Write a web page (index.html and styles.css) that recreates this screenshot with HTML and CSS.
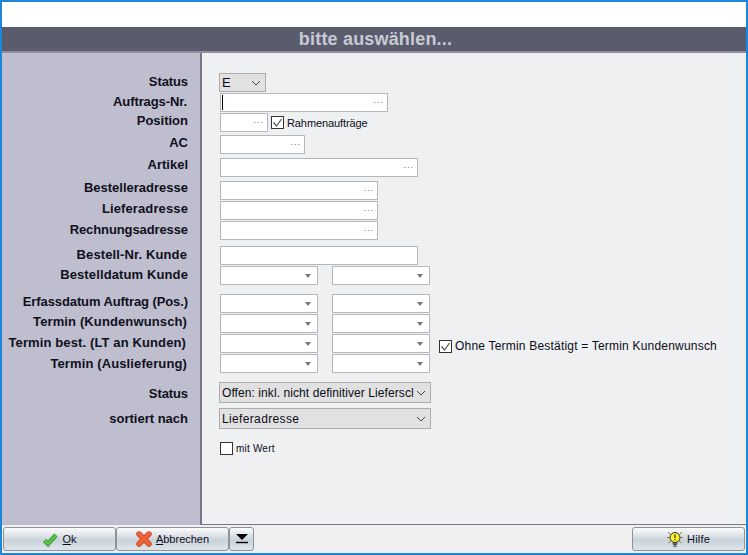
FILE: index.html
```html
<!DOCTYPE html>
<html lang="de">
<head>
<meta charset="utf-8">
<title>bitte auswählen...</title>
<link rel="stylesheet" href="styles.css">
</head>
<body>
<div class="window">
  <div class="topband"></div>
  <div class="titlebar">bitte auswählen...</div>
  <div class="main">
    <div class="side"></div>
    <div class="panel"></div>
    <div class="form">
      <div class="row"><label class="lbl p1 tight">Status</label><div class="select sel-e"><span>E</span><svg class="chev" viewBox="0 0 10 6"><path d="M1 1l4 4 4-4"/></svg></div></div>
      <div class="row"><label class="lbl lbl-l1 p1 tight">Auftrags-Nr.</label><div class="field w168"><i class="caret"></i><span class="dots">...</span></div></div>
      <div class="row"><label class="lbl p0">Position</label><div class="field w48"><span class="dots">...</span></div><div class="check chk-r"><svg class="box" viewBox="0 0 13 13"><rect x=".5" y=".5" width="12" height="12"/><path d="M2.500 6.500l3 3.500 5-7"/></svg><span>Rahmenaufträge</span></div></div>
      <div class="row mt2"><label class="lbl p0">AC</label><div class="field w85"><span class="dots">...</span></div></div>
      <div class="row mt3"><label class="lbl n1">Artikel</label><div class="field w198"><span class="dots">...</span></div></div>
      <div class="row mt3"><label class="lbl n1">Bestelleradresse</label><div class="field w158"><span class="dots">...</span></div></div>
      <div class="row"><label class="lbl p0 wide">Lieferadresse</label><div class="field w158"><span class="dots">...</span></div></div>
      <div class="row"><label class="lbl p1 tight">Rechnungsadresse</label><div class="field w158"><span class="dots">...</span></div></div>
      <div class="row mt5"><label class="lbl lbl-l1 p1 wide">Bestell-Nr. Kunde</label><div class="field w198"></div></div>
      <div class="row"><label class="lbl p1 wide">Bestelldatum Kunde</label><div class="field w98"><i class="arrow"></i></div><div class="field w98 second"><i class="arrow"></i></div></div>
      <div class="row mt8"><label class="lbl p0 tight">Erfassdatum Auftrag (Pos.)</label><div class="field w98"><i class="arrow"></i></div><div class="field w98 second"><i class="arrow"></i></div></div>
      <div class="row"><label class="lbl lbl-l1 p0 wide">Termin (Kundenwunsch)</label><div class="field w98"><i class="arrow"></i></div><div class="field w98 second"><i class="arrow"></i></div></div>
      <div class="row"><label class="lbl lbl-l2 p1 wide">Termin best. (LT an Kunden)</label><div class="field w98"><i class="arrow"></i></div><div class="field w98 second"><i class="arrow"></i></div><div class="check chk-o"><svg class="box" viewBox="0 0 13 13"><rect x=".5" y=".5" width="12" height="12"/><path d="M2.500 6.500l3 3.500 5-7"/></svg><span>Ohne Termin Bestätigt = Termin Kundenwunsch</span></div></div>
      <div class="row"><label class="lbl lbl-l1 p2 wide">Termin (Auslieferung)</label><div class="field w98"><i class="arrow"></i></div><div class="field w98 second"><i class="arrow"></i></div></div>
      <div class="row tall mt8"><label class="lbl p4 tight">Status</label><div class="select sel-w"><span class="fit">Offen: inkl. nicht definitiver Lieferscl</span><svg class="chev" viewBox="0 0 10 6"><path d="M1 1l4 4 4-4"/></svg></div></div>
      <div class="row tall mt4"><label class="lbl p3">sortiert nach</label><div class="select sel-w"><span class="spaced">Lieferadresse</span><svg class="chev" viewBox="0 0 10 6"><path d="M1 1l4 4 4-4"/></svg></div></div>
      <div class="row mt12"><div class="lbl"></div><div class="check chk-w"><svg class="box" viewBox="0 0 13 13"><rect x=".5" y=".5" width="12" height="12"/></svg><span>mit Wert</span></div></div>
    </div>
  </div>
  <div class="footer">
    <button class="btn btn-main"><svg class="ico" viewBox="0 0 16 15"><path d="M2.500 8.500l3.500 3.500 8-9" fill="none" stroke="#2f8f2c" stroke-width="4.400"/><path d="M2.500 8.500l3.500 3.500 8-9" fill="none" stroke="#5cc24a" stroke-width="2.800"/></svg><span><u>O</u>k</span></button>
    <button class="btn btn-main"><svg class="ico ico-x" viewBox="0 0 16 16"><path d="M3 3l10 10M13 3L3 13" fill="none" stroke="#c9401f" stroke-width="5.400" stroke-linecap="round"/><path d="M3 3l10 10M13 3L3 13" fill="none" stroke="#f4623a" stroke-width="3.600" stroke-linecap="round"/></svg><span><u>A</u>bbrechen</span></button>
    <button class="btn btn-more"><svg class="ico-more" viewBox="0 0 12 10"><path d="M0 0h12L6 6z"/><path d="M0 8.500h12" stroke="#000" stroke-width="1.400"/></svg></button>
    <button class="btn btn-main btn-help"><svg class="ico ico-h" viewBox="0 0 16 16"><g stroke="#7f7f35" stroke-width="1"><path d="M1 1l2.500 2.500M15 1l-2.500 2.500M0 6.500h2.500M13.500 6.500H16M1.500 12l2.500-2M14.500 12l-2.500-2"/></g><circle cx="8" cy="6.500" r="5" fill="#f7f02a" stroke="#333" stroke-width="1"/><path d="M8 3.500v3.500M8 8v1.200" stroke="#222" stroke-width="1.100"/><path d="M5.500 12.200h5M6 13.700h4M6.500 15.200h3" stroke="#333" stroke-width="1"/></svg><span class="help-text">Hilfe</span></button>
  </div>
</div>
</body>
</html>
```
FILE: styles.css
```css
* { box-sizing: border-box; }
html, body { margin: 0; padding: 0; }
body { font-family: "Liberation Sans", Arial, sans-serif; background: #fff; }
.window { width: 748px; height: 555px; border: 2px solid #1c86dc; background: #f0f0f0; display: flex; flex-direction: column; overflow: hidden; }
.topband { height: 25px; background: #fff; flex: none; }
.titlebar { height: 24px; flex: none; background: #5a5c6e; color: #c9cad4; font-weight: bold; font-size: 18px; letter-spacing: .18px; line-height: 24px; text-align: center; padding-left: 3px; }
.main { height: 474px; flex: none; position: relative; background: #bebecf; border-top: 2px solid #8f8f9f; }
.side { position: absolute; left: 0; top: 0; bottom: 0; width: 198px; }
.panel { position: absolute; left: 198px; top: 0; right: 0; bottom: 0; background: #eff0f2; border-left: 2px solid #77778a; border-bottom: 1px solid #77778a; }
.form { position: absolute; inset: 0; padding-top: 20px; display: flex; flex-direction: column; }
.row { display: flex; align-items: flex-start; height: 20px; flex: none; }
.row.tall { height: 22px; }
.mt2 { margin-top: 2px; } .mt3 { margin-top: 3px; } .mt4 { margin-top: 4px; } .mt5 { margin-top: 5px; } .mt8 { margin-top: 8px; } .mt12 { margin-top: 12px; }
.lbl { width: 186px; margin-right: 32px; flex: none; text-align: right; font-weight: bold; font-size: 13px; line-height: 15px; color: #10101c; white-space: nowrap; }
.tight { letter-spacing: -.1px; }
.wide { letter-spacing: .12px; }
.n1 { margin-top: -1px; }
.p0 { padding-top: 0; }
.p1 { padding-top: 1px; }
.p2 { padding-top: 2px; }
.p3 { padding-top: 3px; }
.p4 { padding-top: 4px; }
.lbl-l1 { width: 185px; margin-right: 33px; }
.lbl-l2 { width: 184px; margin-right: 34px; }
.field { height: 19px; border: 1px solid #b4b8bc; background: #fff; position: relative; flex: none; }
.w168 { width: 168px; } .w48 { width: 48px; } .w85 { width: 85px; } .w198 { width: 198px; } .w158 { width: 158px; } .w98 { width: 98px; }
.second { margin-left: 14px; }
.dots { position: absolute; right: 3px; top: 0; font-size: 9px; line-height: 12px; color: #666; letter-spacing: 1px; }
.caret { position: absolute; left: 1px; top: 1px; width: 1px; height: 15px; background: #000; }
.arrow { position: absolute; right: 6px; top: 7px; width: 0; height: 0; border-left: 3px solid transparent; border-right: 3px solid transparent; border-top: 4px solid #777; }
.select { height: 19px; margin-left: -1px; border: 1px solid #adadad; background: #e1e1e1; display: flex; align-items: center; justify-content: space-between; font-size: 12px; color: #0c0c18; padding: 0 4px 0 2px; flex: none; white-space: nowrap; overflow: hidden; }
.sel-e { width: 47px; font-size: 13px; }
.sel-w { width: 212px; height: 21px; }
.fit { letter-spacing: .08px; }
.spaced { letter-spacing: .35px; }
.chev { width: 10px; height: 6px; flex: none; }
.chev path { fill: none; stroke: #444; stroke-width: 1; }
.check { display: flex; align-items: center; font-size: 11px; color: #0c0c18; flex: none; }
.chk-r { margin: 3px 0 0 3px; letter-spacing: -.1px; }
.chk-o { margin: 5px 0 0 9px; font-size: 12px; letter-spacing: .2px; }
.chk-w { margin-left: 0; font-size: 10px; letter-spacing: .2px; }
.box { width: 13px; height: 13px; margin-right: 3px; flex: none; }
.box rect { fill: #fff; stroke: #333; }
.box path { fill: none; stroke: #555; stroke-width: 1.2; }
.footer { height: 27px; flex: none; background: #f0f0f0; display: flex; align-items: flex-start; padding: 2px 1px 0 1px; }
.btn { height: 24px; padding: 0; margin: 0; border: 1px solid #8d9398; border-radius: 3px; background: linear-gradient(#fbfcfd 0%, #e6eaee 25%, #c9d2da 55%, #dfe5ea 100%); display: flex; align-items: center; justify-content: center; font-family: "Liberation Sans", Arial, sans-serif; font-size: 11px; color: #10101c; flex: none; }
.btn-main { width: 113px; }
.btn-more { width: 25px; }
.btn-help { margin-left: auto; }
.help-text { letter-spacing: .2px; }
.ico { width: 16px; height: 15px; margin-right: 4px; }
.ico-x { height: 16px; width: 16px; }
.ico-h { height: 16px; width: 16px; }
.ico-more { width: 12px; height: 10px; }
```
